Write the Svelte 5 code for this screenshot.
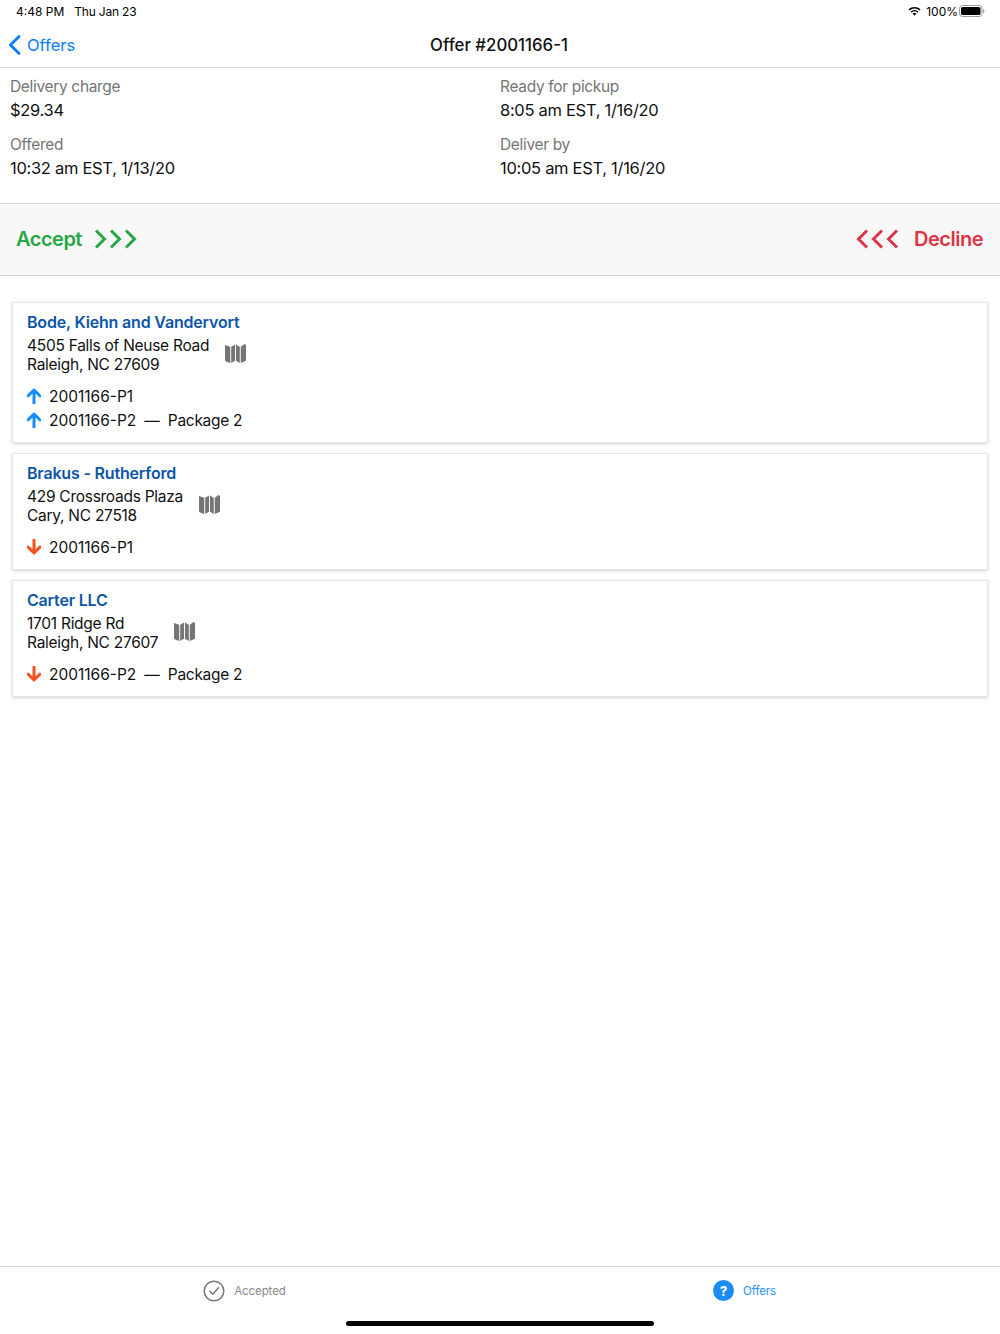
<script lang="ts">
  const details = [
    { label: 'Delivery charge', value: '$29.34' },
    { label: 'Ready for pickup', value: '8:05 am EST, 1/16/20' },
    { label: 'Offered', value: '10:32 am EST, 1/13/20' },
    { label: 'Deliver by', value: '10:05 am EST, 1/16/20' }
  ];

  const stops = [
    {
      name: 'Bode, Kiehn and Vandervort',
      street: '4505 Falls of Neuse Road',
      city: 'Raleigh, NC 27609',
      dir: 'up',
      packages: [
        { id: '2001166-P1' },
        { id: '2001166-P2', note: 'Package 2' }
      ]
    },
    {
      name: 'Brakus - Rutherford',
      street: '429 Crossroads Plaza',
      city: 'Cary, NC 27518',
      dir: 'down',
      packages: [{ id: '2001166-P1' }]
    },
    {
      name: 'Carter LLC',
      street: '1701 Ridge Rd',
      city: 'Raleigh, NC 27607',
      dir: 'down',
      packages: [{ id: '2001166-P2', note: 'Package 2' }]
    }
  ];
</script>

<div class="screen">
  <div class="status">
    <div class="status-left">
      <span>4:48 PM</span>
      <span class="date">Thu Jan 23</span>
    </div>
    <div class="status-right">
      <svg width="13" height="10" viewBox="0 0 15 11">
        <path d="M0.6 3.6a10 10 0 0 1 13.8 0l-1.2 1.3a8.2 8.2 0 0 0-11.4 0z" fill="#000" />
        <path d="M3 6.1a6.6 6.6 0 0 1 9 0l-1.2 1.3a4.8 4.8 0 0 0-6.6 0z" fill="#000" />
        <path d="M5.3 8.5a3.2 3.2 0 0 1 4.4 0L7.5 10.9z" fill="#000" />
      </svg>
      <span class="pct">100%</span>
      <svg width="26" height="12" viewBox="0 0 26 12">
        <rect x="0.5" y="0.5" width="22.5" height="11" rx="3" fill="none" stroke="#999" />
        <rect x="2" y="2" width="19.5" height="8" rx="1.6" fill="#000" />
        <path d="M24 4v4c.8-.3 1.4-1 1.4-2s-.6-1.700-1.400-2z" fill="#999" />
      </svg>
    </div>
  </div>

  <header class="nav">
    <div class="back">
      <svg width="13" height="20" viewBox="0 0 13 20">
        <path d="M11 1.500 2.500 10l8.500 8.500" fill="none" stroke="#0a7cff" stroke-width="2.800" stroke-linecap="round" stroke-linejoin="round" />
      </svg>
      <span>Offers</span>
    </div>
    <h1>Offer #2001166-1</h1>
  </header>

  <section class="details">
    {#each details as d}
      <div class="detail">
        <div class="label">{d.label}</div>
        <div class="value">{d.value}</div>
      </div>
    {/each}
  </section>

  <section class="actions">
    <div class="action accept">
      <span>Accept</span>
      <svg width="43" height="20" viewBox="0 0 43 20">
        <path d="M2 1.500 10.500 10 2 18.500M17 1.500 25.500 10 17 18.500M32 1.500 40.500 10 32 18.500" fill="none" stroke="#28a745" stroke-width="3" />
      </svg>
    </div>
    <div class="action decline">
      <svg width="43" height="20" viewBox="0 0 43 20">
        <path d="M11 1.500 2.500 10 11 18.500M26 1.500 17.500 10 26 18.500M41 1.500 32.500 10 41 18.500" fill="none" stroke="#dc3545" stroke-width="3" />
      </svg>
      <span>Decline</span>
    </div>
  </section>

  <main class="stops">
    {#each stops as stop}
      <article class="card">
        <h2>{stop.name}</h2>
        <div class="address">
          <div>
            <div>{stop.street}</div>
            <div>{stop.city}</div>
          </div>
          <svg class="map" width="21" height="21" viewBox="0 0 22 21">
            <path d="M0 1.500 5.500 3.500V20.500L1 19 0 17.500zM6.500 3.500 10.500 1V18L6.500 20.500zM11.500 1 15.500 3.500V20.500L11.500 18zM16.500 3.500 20.500 .5 22 1.500V18L16.500 20.500z" fill="#757575" />
          </svg>
        </div>
        <div class="packages">
          {#each stop.packages as p}
            <div class="package">
              <svg width="14" height="16" viewBox="0 0 14 16" class:flip={stop.dir === 'down'}>
                <path d="M7 15V2M1.200 7.800 7 2l5.800 5.800" fill="none" stroke={stop.dir === 'up' ? '#148cff' : '#f4511e'} stroke-width="3" stroke-linecap="round" stroke-linejoin="round" />
              </svg>
              <span>{p.id}</span>
              {#if p.note}
                <span>—</span>
                <span class="note">{p.note}</span>
              {/if}
            </div>
          {/each}
        </div>
      </article>
    {/each}
  </main>

  <footer class="tabs">
    <div class="tab">
      <svg width="22" height="22" viewBox="0 0 22 22">
        <circle cx="11" cy="11" r="9.800" fill="none" stroke="#77777b" stroke-width="1.500" />
        <path d="M6.800 11.300 9.800 14.300 15.500 7.800" fill="none" stroke="#77777b" stroke-width="1.500" stroke-linecap="round" stroke-linejoin="round" />
      </svg>
      <span>Accepted</span>
    </div>
    <div class="tab active">
      <span class="help">?</span>
      <span>Offers</span>
    </div>
  </footer>
  <div class="home-area">
    <div class="home-bar"></div>
  </div>
</div>

<style>
  :global(body) {
    background: #fff;
  }
  .screen {
    width: 1000px;
    height: 1334px;
    display: flex;
    flex-direction: column;
    font-family: Inter, "Noto Sans", sans-serif;
    font-size: 16px;
    color: #111;
    background: #fff;
  }
  .status {
    height: 24px;
    box-sizing: border-box;
    display: flex;
    justify-content: space-between;
    align-items: center;
    padding: 0 15px 2px 16px;
    font-size: 12px;
    color: #000;
    flex-shrink: 0;
  }
  .status-left {
    display: flex;
    gap: 10px;
  }
  .date {
    letter-spacing: -0.2px;
  }
  .status-right {
    display: flex;
    align-items: center;
    gap: 5px;
  }
  .pct {
    margin-right: -4px;
  }
  .nav {
    height: 43px;
    position: relative;
    display: flex;
    align-items: center;
    justify-content: center;
    border-bottom: 1px solid #dcdcdc;
    flex-shrink: 0;
  }
  .back {
    position: absolute;
    left: 8px;
    top: 11px;
    display: flex;
    align-items: center;
    gap: 6px;
    color: #0a7cff;
    font-size: 16.500px;
  }
  h1 {
    margin: -2px 2px 0 0;
    font-size: 16.800px;
    font-weight: 500;
  }
  .details {
    display: grid;
    grid-template-columns: 490px 1fr;
    padding: 6px 10px 0;
    height: 135px;
    box-sizing: border-box;
    align-content: start;
    row-gap: 10px;
    flex-shrink: 0;
  }
  .detail {
    height: 48px;
    font-size: 16.500px;
    letter-spacing: -0.3px;
  }
  .label {
    color: #757575;
    font-size: 15.500px;
    line-height: 26px;
    letter-spacing: -0.33px;
  }
  .value {
    line-height: 20px;
  }
  .actions {
    height: 73px;
    box-sizing: border-box;
    display: flex;
    justify-content: space-between;
    align-items: center;
    padding: 0 17px 2px 16px;
    background: #f8f8f8;
    border-top: 1px solid #d4d4d4;
    border-bottom: 1px solid #d4d4d4;
    flex-shrink: 0;
  }
  .action {
    display: flex;
    align-items: center;
    gap: 12px;
    font-size: 20px;
    font-weight: 600;
    letter-spacing: -0.5px;
  }
  .accept {
    color: #28a745;
  }
  .decline {
    color: #dc3545;
    gap: 15px;
  }
  .stops {
    flex: 1;
    display: flex;
    flex-direction: column;
    gap: 10px;
    padding: 26px 12px 0;
  }
  .card {
    border: 1px solid #e6e6e6;
    box-shadow: 0 1px 3px rgba(0, 0, 0, 0.18);
    padding: 9px 14px 10px;
    background: #fff;
  }
  h2 {
    margin: 0;
    font-size: 16px;
    line-height: 20px;
    font-weight: 600;
    letter-spacing: -0.18px;
    color: #0b55a8;
  }
  .address {
    display: flex;
    align-items: center;
    gap: 16px;
    margin-top: 4px;
    font-size: 15.500px;
    line-height: 19px;
    letter-spacing: -0.27px;
  }
  .map {
    margin-bottom: 4px;
  }
  .packages {
    margin-top: 10px;
    font-size: 15.500px;
  }
  .package {
    height: 24px;
    display: flex;
    align-items: center;
    gap: 8px;
  }
  .note {
    letter-spacing: -0.3px;
  }
  .flip {
    transform: rotate(180deg);
  }
  .tabs {
    height: 48px;
    display: flex;
    border-top: 1px solid #d6d6d6;
    flex-shrink: 0;
  }
  .tab {
    flex: 1;
    display: flex;
    align-items: center;
    justify-content: center;
    gap: 9px;
    padding: 0 11px 1px 0;
    font-size: 11.500px;
    letter-spacing: -0.1px;
    color: #8a8a8e;
  }
  .tab.active {
    color: #2a90f5;
  }
  .help {
    width: 21px;
    height: 21px;
    border-radius: 50%;
    background: #1c8cf5;
    color: #fff;
    display: flex;
    align-items: center;
    justify-content: center;
    font-weight: 800;
    font-size: 13px;
  }
  .home-area {
    height: 19px;
    display: flex;
    justify-content: center;
    flex-shrink: 0;
  }
  .home-bar {
    width: 308px;
    height: 5px;
    margin-top: 6px;
    border-radius: 3px;
    background: #000;
  }
</style>
